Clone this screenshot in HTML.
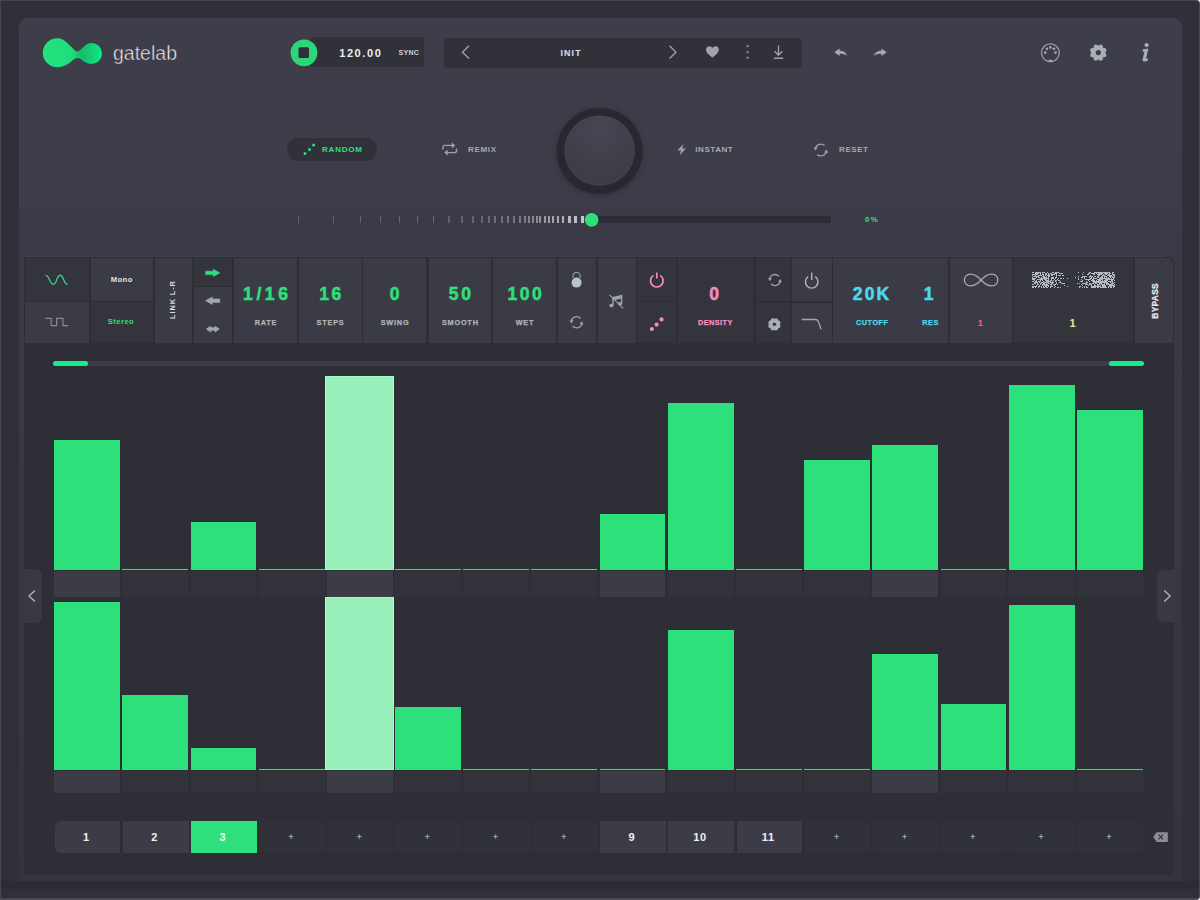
<!DOCTYPE html>
<html><head><meta charset="utf-8"><style>
html,body{margin:0;padding:0;}
body{width:1200px;height:900px;overflow:hidden;position:relative;background:#30303a;font-family:"Liberation Sans", sans-serif;}
.t{position:absolute;width:300px;height:100px;line-height:100px;text-align:center;white-space:nowrap;}
svg{overflow:visible;}
</style></head><body>
<div style="position:absolute;left:0px;top:0px;width:1200px;height:1px;background:#45454f;"></div>
<div style="position:absolute;left:0px;top:0px;width:1px;height:900px;background:#464651;"></div>
<div style="position:absolute;left:1199px;top:0px;width:1px;height:900px;background:#464651;"></div>
<div style="position:absolute;left:0px;top:898px;width:1200px;height:2px;background:#4a4a55;"></div>
<div style="position:absolute;left:1px;top:881px;width:1198px;height:8px;background:#2b2b33;"></div>
<div style="position:absolute;left:19px;top:18px;width:1163px;height:863px;background:linear-gradient(#3e3d4a 0px, #3d3c49 192px, #3b3a47 192px, #3a3a46 238px, #393943 430px, #34343e 863px);border-radius:9px 9px 3px 3px;"></div>
<svg style="position:absolute;left:1196px;top:0px" width="4" height="4"><path d="M0,0 H4 V4 A4,4 0 0 0 0,0 Z" fill="#ffffff"/></svg>
<svg style="position:absolute;left:1196px;top:896px" width="4" height="4"><path d="M4,0 V4 H0 A4,4 0 0 0 4,0 Z" fill="#ffffff"/></svg>
<svg style="position:absolute;left:30px;top:30px;" width="80" height="45" viewBox="30 30 80 45"><defs><linearGradient id="lg" gradientUnits="userSpaceOnUse" x1="42" y1="0" x2="102" y2="0"><stop offset="0" stop-color="#22e47f"/><stop offset="0.5" stop-color="#1edc7a"/><stop offset="0.66" stop-color="#13bd6a"/><stop offset="0.8" stop-color="#15cc72"/><stop offset="1" stop-color="#08ef88"/></linearGradient></defs><path d="M57.3,38.25 C61,38.25 63.5,39.5 66.5,42.3 L75,50.4 C76.5,51.8 78,51.8 79.5,50.6 C83,47.6 86.5,43 91.5,43 A10.5,10.5 0 0 1 91.5,64 C87,64 83.5,61 80.5,59 C78.5,57.8 76.5,57.8 74.5,59 C71,61.5 66,67.25 57.3,67.25 A14.5,14.5 0 0 1 57.3,38.25 Z" fill="url(#lg)"/></svg>
<div class="t" style="left:-5px;top:3.200000000000003px;font-size:19.5px;color:#f0f0f4;font-weight:400;letter-spacing:0px;text-indent:0px;-webkit-text-stroke:0.5px #3c3c47;">gatelab</div>
<div style="position:absolute;left:310px;top:37px;width:114px;height:30px;background:#31313a;border-radius:3px;"></div>
<svg style="position:absolute;left:285px;top:35px;" width="40" height="36" viewBox="285 35 40 36"><circle cx="304" cy="52.8" r="13.4" fill="#2cd679"/><rect x="298.5" y="47.3" width="10.5" height="10.7" rx="1.6" fill="#2f2f38"/></svg>
<div class="t" style="left:210px;top:2.700000000000003px;font-size:11px;color:#ececf0;font-weight:700;letter-spacing:1.6px;text-indent:1.6px;">120.00</div>
<div class="t" style="left:258.7px;top:2.700000000000003px;font-size:7px;color:#d0d0d6;font-weight:700;letter-spacing:0.3px;text-indent:0.3px;">SYNC</div>
<div style="position:absolute;left:444px;top:37.5px;width:358px;height:30px;background:#31313a;border-radius:4px;"></div>
<svg style="position:absolute;left:455px;top:40px;" width="340" height="25" viewBox="455 40 340 25"><path d="M469,45.8 L462.5,52.2 L469,58.6" fill="none" stroke="#a0a0a9" stroke-width="1.4"/><path d="M669.5,45.8 L676,52.2 L669.5,58.6" fill="none" stroke="#a0a0a9" stroke-width="1.4"/><path d="M712.4,57.8 C708.5,54.6 706,52.6 706,49.6 C706,47.4 707.6,46.2 709.3,46.2 C710.7,46.2 711.8,47 712.4,48 C713,47 714.1,46.2 715.5,46.2 C717.2,46.2 718.8,47.4 718.8,49.6 C718.8,52.6 716.3,54.6 712.4,57.8 Z" fill="#a3a3ad"/><circle cx="747.7" cy="46.2" r="1.1" fill="#9a9aa4"/><circle cx="747.7" cy="52.2" r="1.1" fill="#9a9aa4"/><circle cx="747.7" cy="57.8" r="1.1" fill="#9a9aa4"/><path d="M778.5,45.6 V55 M774.6,51.2 L778.5,55.2 L782.4,51.2 M773.8,58.2 H783.2" fill="none" stroke="#a0a0a9" stroke-width="1.4"/></svg>
<div class="t" style="left:420.5px;top:2.700000000000003px;font-size:8.8px;color:#e0e0e6;font-weight:700;letter-spacing:1.2px;text-indent:1.2px;">INIT</div>
<svg style="position:absolute;left:830px;top:44px;" width="60" height="16" viewBox="830 44 60 16"><path d="M834.3,52.3 L839.6,48.5 L839.6,50.7 C843.6,50.7 846.3,52.6 847.2,56 C845.4,54.2 843,53.8 839.6,53.8 L839.6,56.1 Z" fill="#a7a7b0"/><path d="M886.7,52.3 L881.4,48.5 L881.4,50.7 C877.4,50.7 874.7,52.6 873.8,56 C875.6,54.2 878,53.8 881.4,53.8 L881.4,56.1 Z" fill="#a7a7b0"/></svg>
<svg style="position:absolute;left:1036px;top:38px;" width="130" height="30" viewBox="1036 38 130 30"><circle cx="1050.4" cy="52.8" r="8.9" fill="none" stroke="#9e9ea8" stroke-width="1.3"/><circle cx="1045.3" cy="52.6" r="1.3" fill="#a8a8b2"/><circle cx="1046.9" cy="48.8" r="1.3" fill="#a8a8b2"/><circle cx="1050.4" cy="47.4" r="1.3" fill="#a8a8b2"/><circle cx="1053.9" cy="48.8" r="1.3" fill="#a8a8b2"/><circle cx="1055.5" cy="52.6" r="1.3" fill="#a8a8b2"/><rect x="1048.8" y="59.8" width="3.2" height="1.6" fill="#a8a8b2"/><g fill="#a9aeb4"><circle cx="1104.21" cy="55.05" r="2.2"/><circle cx="1100.75" cy="58.51" r="2.2"/><circle cx="1095.85" cy="58.51" r="2.2"/><circle cx="1092.39" cy="55.05" r="2.2"/><circle cx="1092.39" cy="50.15" r="2.2"/><circle cx="1095.85" cy="46.69" r="2.2"/><circle cx="1100.75" cy="46.69" r="2.2"/><circle cx="1104.21" cy="50.15" r="2.2"/><circle cx="1098.3" cy="52.6" r="7.0"/></g><circle cx="1098.3" cy="52.6" r="2.6" fill="#3c3c47"/><circle cx="1146.6" cy="45.0" r="2.1" fill="#a9aeb4"/><path d="M1142.8,49.2 L1148.4,48.6 L1146.2,58 C1146.0,59 1146.8,59.2 1148.2,58.2 L1147.9,60.6 C1145.6,62 1141.9,62.2 1142.6,59.2 L1144.4,51.8 L1142.6,51.8 Z" fill="#a9aeb4"/></svg>
<div style="position:absolute;left:287px;top:138px;width:90px;height:23px;background:#31313a;border-radius:12px;"></div>
<svg style="position:absolute;left:300px;top:140px;" width="20" height="18" viewBox="300 140 20 18"><circle cx="305" cy="153.6" r="1.5" fill="#2de07b"/><circle cx="309.5" cy="149.4" r="1.5" fill="#2de07b"/><circle cx="313.6" cy="145.1" r="1.5" fill="#2de07b"/></svg>
<div class="t" style="left:192px;top:99.5px;font-size:8px;color:#2de07b;font-weight:700;letter-spacing:0.8px;text-indent:0.8px;">RANDOM</div>
<svg style="position:absolute;left:438px;top:140px;" width="24" height="18" viewBox="438 140 24 18"><path d="M443,149.6 V147.2 C443,146.2 443.8,145.4 444.8,145.4 H454 M451.8,143.4 L454.2,145.4 L451.8,147.4 M456.5,148.4 V150.8 C456.5,151.8 455.7,152.6 454.7,152.6 H445.5 M447.7,150.6 L445.3,152.6 L447.7,154.6" fill="none" stroke="#a0a0a9" stroke-width="1.4"/></svg>
<div class="t" style="left:332px;top:99.5px;font-size:8px;color:#a8a8b1;font-weight:700;letter-spacing:0.7px;text-indent:0.7px;">REMIX</div>
<svg style="position:absolute;left:545px;top:97px;" width="110" height="110" viewBox="545 97 110 110"><defs><radialGradient id="kg" cx="0.5" cy="0.2" r="0.9"><stop offset="0" stop-color="#464652"/><stop offset="1" stop-color="#3b3b46"/></radialGradient><filter id="ks" x="-30%" y="-30%" width="160%" height="160%"><feGaussianBlur stdDeviation="2"/></filter></defs><circle cx="599.6" cy="152" r="44" fill="#26262e" opacity="0.5" filter="url(#ks)"/><circle cx="599.6" cy="151" r="43" fill="#28282f"/><circle cx="599.6" cy="150.6" r="35.2" fill="url(#kg)"/><circle cx="599.6" cy="150.6" r="34.8" fill="none" stroke="#4a4a55" stroke-width="0.8" opacity="0.6"/></svg>
<svg style="position:absolute;left:672px;top:140px;" width="20" height="18" viewBox="672 140 20 18"><path d="M683.4,144 L677.4,150.6 L681,150.6 L679.6,155.4 L685.8,148.6 L682.2,148.6 Z" fill="#a0a0a9"/></svg>
<div class="t" style="left:564px;top:99.5px;font-size:8px;color:#a8a8b1;font-weight:700;letter-spacing:0.55px;text-indent:0.55px;">INSTANT</div>
<svg style="position:absolute;left:810px;top:140px;" width="22" height="20" viewBox="810 140 22 20"><path d="M815.4,148.4 A5.6,5.6 0 0 1 824.6,145.6 M826.4,151.6 A5.6,5.6 0 0 1 817.2,154.4" fill="none" stroke="#a0a0a9" stroke-width="1.4"/><path d="M813.6,147.2 L815.4,150.4 L817.8,147.6 Z M828.2,152.8 L826.4,149.6 L824,152.4 Z" fill="#a0a0a9"/></svg>
<div class="t" style="left:703.5px;top:99.5px;font-size:8px;color:#a8a8b1;font-weight:700;letter-spacing:0.55px;text-indent:0.55px;">RESET</div>
<div style="position:absolute;left:298px;top:216px;width:1px;height:7px;background:rgb(100,100,108);"></div>
<div style="position:absolute;left:333px;top:216px;width:1px;height:7px;background:rgb(100,100,108);"></div>
<div style="position:absolute;left:360px;top:216px;width:1px;height:7px;background:rgb(100,100,108);"></div>
<div style="position:absolute;left:380px;top:216px;width:1px;height:7px;background:rgb(101,101,109);"></div>
<div style="position:absolute;left:399px;top:216px;width:1px;height:7px;background:rgb(103,103,111);"></div>
<div style="position:absolute;left:417px;top:216px;width:1px;height:7px;background:rgb(104,104,112);"></div>
<div style="position:absolute;left:433px;top:216px;width:1px;height:7px;background:rgb(105,105,113);"></div>
<div style="position:absolute;left:448px;top:216px;width:2px;height:7px;background:rgb(96,96,104);"></div>
<div style="position:absolute;left:461px;top:216px;width:2px;height:7px;background:rgb(98,98,106);"></div>
<div style="position:absolute;left:472px;top:216px;width:2px;height:7px;background:rgb(100,100,108);"></div>
<div style="position:absolute;left:481px;top:216px;width:2px;height:7px;background:rgb(102,102,110);"></div>
<div style="position:absolute;left:488px;top:216px;width:2px;height:7px;background:rgb(105,105,113);"></div>
<div style="position:absolute;left:494px;top:216px;width:2px;height:7px;background:rgb(108,108,116);"></div>
<div style="position:absolute;left:501px;top:216px;width:2px;height:7px;background:rgb(111,111,119);"></div>
<div style="position:absolute;left:507px;top:216px;width:2px;height:7px;background:rgb(115,115,123);"></div>
<div style="position:absolute;left:513px;top:216px;width:2px;height:7px;background:rgb(118,118,126);"></div>
<div style="position:absolute;left:519px;top:216px;width:2px;height:7px;background:rgb(122,122,130);"></div>
<div style="position:absolute;left:524px;top:216px;width:2px;height:7px;background:rgb(127,127,135);"></div>
<div style="position:absolute;left:528px;top:216px;width:2px;height:7px;background:rgb(131,131,139);"></div>
<div style="position:absolute;left:532px;top:216px;width:2px;height:7px;background:rgb(136,136,144);"></div>
<div style="position:absolute;left:536px;top:216px;width:2px;height:7px;background:rgb(141,141,149);"></div>
<div style="position:absolute;left:539px;top:216px;width:2px;height:7px;background:rgb(146,146,154);"></div>
<div style="position:absolute;left:544px;top:216px;width:2px;height:7px;background:rgb(152,152,160);"></div>
<div style="position:absolute;left:548px;top:216px;width:2px;height:7px;background:rgb(157,157,165);"></div>
<div style="position:absolute;left:552px;top:216px;width:2px;height:7px;background:rgb(163,163,171);"></div>
<div style="position:absolute;left:557px;top:216px;width:2px;height:7px;background:rgb(170,170,178);"></div>
<div style="position:absolute;left:562px;top:216px;width:2px;height:7px;background:rgb(176,176,184);"></div>
<div style="position:absolute;left:568px;top:216px;width:3px;height:7px;background:rgb(183,183,191);"></div>
<div style="position:absolute;left:574px;top:216px;width:3px;height:7px;background:rgb(190,190,198);"></div>
<div style="position:absolute;left:581px;top:216px;width:3px;height:7px;background:rgb(198,198,206);"></div>
<div style="position:absolute;left:598px;top:216.3px;width:233px;height:7px;background:#2c2c35;"></div>
<svg style="position:absolute;left:580px;top:208px;" width="24" height="24" viewBox="580 208 24 24"><circle cx="591.6" cy="219.8" r="6.9" fill="#2de07b"/></svg>
<div class="t" style="left:721.5px;top:169.8px;font-size:8px;color:#2de07b;font-weight:700;letter-spacing:1.2px;text-indent:1.2px;">0%</div>
<div style="position:absolute;left:24px;top:256px;width:1150px;height:619px;background:#2e2e37;border-radius:0 8px 2px 2px;"></div>
<div style="position:absolute;left:24px;top:256px;width:1142px;height:1px;background:#40404b;"></div>
<div style="position:absolute;left:25px;top:258px;width:64px;height:42.5px;background:#34343d;"></div>
<div style="position:absolute;left:25px;top:302px;width:64px;height:41px;background:#3b3b45;"></div>
<div style="position:absolute;left:90.5px;top:258px;width:62.2px;height:42.5px;background:#3b3b45;"></div>
<div style="position:absolute;left:90.5px;top:302px;width:62.2px;height:41px;background:#34343d;"></div>
<div style="position:absolute;left:154.5px;top:258px;width:37.7px;height:85px;background:#3b3b45;"></div>
<div style="position:absolute;left:194px;top:258px;width:37.5px;height:27.5px;background:#34343d;"></div>
<div style="position:absolute;left:194px;top:287px;width:37.5px;height:56px;background:#3b3b45;"></div>
<div style="position:absolute;left:234px;top:258px;width:63px;height:85px;background:#3b3b45;"></div>
<div style="position:absolute;left:299px;top:258px;width:62.5px;height:85px;background:#3b3b45;"></div>
<div style="position:absolute;left:363.3px;top:258px;width:62.7px;height:85px;background:#3b3b45;"></div>
<div style="position:absolute;left:428.5px;top:258px;width:62.8px;height:85px;background:#3b3b45;"></div>
<div style="position:absolute;left:493px;top:258px;width:63.3px;height:85px;background:#3b3b45;"></div>
<div style="position:absolute;left:557.5px;top:258px;width:38.1px;height:85px;background:#3b3b45;"></div>
<div style="position:absolute;left:597.5px;top:258px;width:38.1px;height:85px;background:#3b3b45;"></div>
<div style="position:absolute;left:637.3px;top:258px;width:38.3px;height:42.5px;background:#34343d;"></div>
<div style="position:absolute;left:637.3px;top:302px;width:38.3px;height:41px;background:#34343d;"></div>
<div style="position:absolute;left:677.8px;top:258px;width:75.7px;height:85px;background:#34343d;"></div>
<div style="position:absolute;left:755.5px;top:258px;width:35.5px;height:42.5px;background:#34343d;"></div>
<div style="position:absolute;left:755.5px;top:302.5px;width:35.5px;height:40.5px;background:#34343d;"></div>
<div style="position:absolute;left:792.3px;top:258px;width:39.3px;height:42.5px;background:#3b3b45;"></div>
<div style="position:absolute;left:792.3px;top:302.5px;width:39.3px;height:40.5px;background:#3b3b45;"></div>
<div style="position:absolute;left:833.3px;top:258px;width:114.5px;height:85px;background:#3b3b45;"></div>
<div style="position:absolute;left:950px;top:258px;width:62px;height:85px;background:#3b3b45;"></div>
<div style="position:absolute;left:1013.7px;top:258px;width:119.5px;height:85px;background:#34343d;"></div>
<div style="position:absolute;left:1134.7px;top:258px;width:38.0px;height:85px;background:#3b3b45;border-radius:0 6px 0 0;"></div>
<svg style="position:absolute;left:40px;top:268px;" width="34" height="66" viewBox="40 268 34 66"><path d="M45.6,275.4 C49.6,275.4 49.4,284.2 53.3,284.2 C57.2,284.2 56.4,275.2 60.1,275.2 C63.8,275.2 63.6,284.2 67.4,284.2" fill="none" stroke="#34cf84" stroke-width="1.4"/><path d="M45.5,318.3 H51.2 V325.7 H56.6 V318.3 H62.9 V325.7 H68.3" fill="none" stroke="#8a8a95" stroke-width="1.2"/></svg>
<div class="t" style="left:-28.5px;top:230px;font-size:7.6px;color:#e2e2e8;font-weight:700;letter-spacing:0.5px;text-indent:0.5px;">Mono</div>
<div class="t" style="left:-29.299999999999997px;top:272px;font-size:7.6px;color:#2de07b;font-weight:700;letter-spacing:0.5px;text-indent:0.5px;">Stereo</div>
<div class="t" style="left:23px;top:250px;font-size:7.4px;color:#dcdce2;font-weight:700;letter-spacing:0.9px;text-indent:0.9px;transform:rotate(-90deg);">LINK L-R</div>
<svg style="position:absolute;left:200px;top:262px;" width="28" height="76" viewBox="200 262 28 76"><path d="M205.6,271.2 H213.2 V269.2 L219.8,272.9 L213.2,276.6 V274.6 H205.6 Z" fill="#2de07b" stroke="#2de07b" stroke-width="0.6" stroke-linejoin="round"/><path d="M219.8,299 H212.2 V297 L205.6,300.7 L212.2,304.4 V302.4 H219.8 Z" fill="#a2a8ae" stroke="#a2a8ae" stroke-width="0.6" stroke-linejoin="round"/><path d="M206.2,329.1 L210.6,326 V327.6 H215 V326 L219.4,329.1 L215,332.2 V330.6 H210.6 V332.2 Z" fill="#a2a8ae" stroke="#a2a8ae" stroke-width="0.5" stroke-linejoin="round"/></svg>
<div class="t" style="left:115.5px;top:244px;font-size:17.5px;color:#2de07b;font-weight:700;letter-spacing:3.6px;text-indent:3.6px;-webkit-text-stroke:0.5px #2de07b;">1/16</div>
<div class="t" style="left:115.5px;top:273.2px;font-size:7.3px;color:#b2b2ba;font-weight:700;letter-spacing:0.8px;text-indent:0.8px;-webkit-text-stroke:0.25px #b2b2ba;">RATE</div>
<div class="t" style="left:180.2px;top:244px;font-size:17.5px;color:#2de07b;font-weight:700;letter-spacing:2.6px;text-indent:2.6px;-webkit-text-stroke:0.5px #2de07b;">16</div>
<div class="t" style="left:180.2px;top:273.2px;font-size:7.3px;color:#b2b2ba;font-weight:700;letter-spacing:0.8px;text-indent:0.8px;-webkit-text-stroke:0.25px #b2b2ba;">STEPS</div>
<div class="t" style="left:244.60000000000002px;top:244px;font-size:17.5px;color:#2de07b;font-weight:700;letter-spacing:2.6px;text-indent:2.6px;-webkit-text-stroke:0.5px #2de07b;">0</div>
<div class="t" style="left:244.60000000000002px;top:273.2px;font-size:7.3px;color:#b2b2ba;font-weight:700;letter-spacing:0.8px;text-indent:0.8px;-webkit-text-stroke:0.25px #b2b2ba;">SWING</div>
<div class="t" style="left:309.9px;top:244px;font-size:17.5px;color:#2de07b;font-weight:700;letter-spacing:2.6px;text-indent:2.6px;-webkit-text-stroke:0.5px #2de07b;">50</div>
<div class="t" style="left:309.9px;top:273.2px;font-size:7.3px;color:#b2b2ba;font-weight:700;letter-spacing:0.8px;text-indent:0.8px;-webkit-text-stroke:0.25px #b2b2ba;">SMOOTH</div>
<div class="t" style="left:374.6px;top:244px;font-size:17.5px;color:#2de07b;font-weight:700;letter-spacing:2.6px;text-indent:2.6px;-webkit-text-stroke:0.5px #2de07b;">100</div>
<div class="t" style="left:374.6px;top:273.2px;font-size:7.3px;color:#b2b2ba;font-weight:700;letter-spacing:0.8px;text-indent:0.8px;-webkit-text-stroke:0.25px #b2b2ba;">WET</div>
<svg style="position:absolute;left:565px;top:268px;" width="24" height="64" viewBox="565 268 24 64"><path d="M573,278 V276 A3.6,3.6 0 0 1 580.2,276 V278" fill="none" stroke="#8a9298" stroke-width="1.3"/><circle cx="576.6" cy="282.6" r="5" fill="#b8c3c5"/><path d="M571.2,321.2 A5.4,5.4 0 0 1 580.6,318.6 M582,323.4 A5.4,5.4 0 0 1 572.6,326.0" fill="none" stroke="#a0a0a9" stroke-width="1.3"/><path d="M569.6,320.2 L571.4,323.4 L573.6,320.6 Z M583.6,324.4 L581.8,321.2 L579.6,324 Z" fill="#a0a0a9"/></svg>
<svg style="position:absolute;left:604px;top:290px;" width="24" height="22" viewBox="604 290 24 22"><path d="M613,305.2 V297.6 L621.6,295.6 V303.4" fill="none" stroke="#9fa2aa" stroke-width="1.4"/><path d="M613,297.6 L621.6,295.6 V298.4 L613,300.4 Z" fill="#9fa2aa"/><ellipse cx="611.4" cy="305.6" rx="2.2" ry="1.8" fill="#9fa2aa"/><ellipse cx="620" cy="303.8" rx="2.2" ry="1.8" fill="#9fa2aa"/><path d="M609.6,294.8 L623.2,308.4" stroke="#9fa2aa" stroke-width="1.1"/></svg>
<svg style="position:absolute;left:645px;top:270px;" width="26" height="66" viewBox="645 270 26 66"><path d="M653.4,275.4 A6.3,6.3 0 1 0 660.2,275.4" fill="none" stroke="#f58cc0" stroke-width="1.7"/><path d="M656.8,272.6 V278.4" stroke="#f58cc0" stroke-width="1.6"/><circle cx="651.9" cy="329" r="2.1" fill="#f58cc0"/><circle cx="656.6" cy="324.6" r="2.1" fill="#f58cc0"/><circle cx="661.5" cy="319.4" r="2.1" fill="#f58cc0"/></svg>
<div class="t" style="left:564px;top:244px;font-size:17.5px;color:#f58cc0;font-weight:700;letter-spacing:0px;text-indent:0px;-webkit-text-stroke:0.5px #f58cc0;">0</div>
<div class="t" style="left:565.2px;top:273.2px;font-size:7.3px;color:#f58cc0;font-weight:700;letter-spacing:0.45px;text-indent:0.45px;-webkit-text-stroke:0.25px #f58cc0;">DENSITY</div>
<svg style="position:absolute;left:765px;top:270px;" width="62" height="64" viewBox="765 270 62 64"><path d="M769.6,279 A5.4,5.4 0 0 1 779,276.4 M780.4,281.2 A5.4,5.4 0 0 1 771,283.8" fill="none" stroke="#a0a0a9" stroke-width="1.3"/><path d="M768,278 L769.8,281.2 L772,278.4 Z M782,282.2 L780.2,279 L778,281.8 Z" fill="#a0a0a9"/><g fill="#a9aeb4"><circle cx="778.28" cy="325.91" r="2.2"/><circle cx="776.01" cy="328.18" r="2.2"/><circle cx="772.79" cy="328.18" r="2.2"/><circle cx="770.52" cy="325.91" r="2.2"/><circle cx="770.52" cy="322.69" r="2.2"/><circle cx="772.79" cy="320.42" r="2.2"/><circle cx="776.01" cy="320.42" r="2.2"/><circle cx="778.28" cy="322.69" r="2.2"/><circle cx="774.4" cy="324.3" r="5.1"/></g><circle cx="774.4" cy="324.3" r="1.7" fill="#34343d"/><path d="M808.2,276.6 A6.3,6.3 0 1 0 815.2,276.6" fill="none" stroke="#b2b2ba" stroke-width="1.4"/><path d="M811.7,272.6 V280" stroke="#b2b2ba" stroke-width="1.4"/><path d="M801.6,319.5 H815.6 C817.4,319.5 818,320.4 818.6,322 L821,329.4" fill="none" stroke="#a7a7b0" stroke-width="1.3"/></svg>
<div class="t" style="left:721px;top:244px;font-size:17.5px;color:#4dd8f0;font-weight:700;letter-spacing:2.2px;text-indent:2.2px;-webkit-text-stroke:0.5px #4dd8f0;">20K</div>
<div class="t" style="left:778.6px;top:244px;font-size:17.5px;color:#4dd8f0;font-weight:700;letter-spacing:0px;text-indent:0px;-webkit-text-stroke:0.5px #4dd8f0;">1</div>
<div class="t" style="left:722px;top:273.2px;font-size:7.3px;color:#4dd8f0;font-weight:700;letter-spacing:0.5px;text-indent:0.5px;-webkit-text-stroke:0.25px #4dd8f0;">CUTOFF</div>
<div class="t" style="left:780.3px;top:273.2px;font-size:7.3px;color:#4dd8f0;font-weight:700;letter-spacing:0.5px;text-indent:0.5px;-webkit-text-stroke:0.25px #4dd8f0;">RES</div>
<svg style="position:absolute;left:960px;top:270px;" width="42" height="20" viewBox="960 270 42 20"><path d="M981.1,280 C977,275.2 974.5,274.2 970.2,274.2 C966.8,274.2 964.4,276.8 964.4,280 C964.4,283.2 966.8,285.8 970.2,285.8 C974.5,285.8 977,284.8 981.1,280 C985.2,275.2 987.7,274.2 992,274.2 C995.4,274.2 997.8,276.8 997.8,280 C997.8,283.2 995.4,285.8 992,285.8 C987.7,285.8 985.2,284.8 981.1,280 Z" fill="none" stroke="#a9a9b2" stroke-width="1.3"/></svg>
<div class="t" style="left:830.3px;top:273px;font-size:9px;color:#f2647c;font-weight:700;letter-spacing:0px;text-indent:0px;">1</div>
<svg style="position:absolute;left:1028px;top:268px;" width="92" height="24" viewBox="1028 268 92 24"><g fill="#b6b9c0"><rect x="1032" y="272" width="2" height="1"/><rect x="1035" y="272" width="6" height="1"/><rect x="1042" y="272" width="3" height="1"/><rect x="1047" y="272" width="1" height="1"/><rect x="1052" y="272" width="2" height="1"/><rect x="1055" y="272" width="4" height="1"/><rect x="1035" y="273" width="4" height="1"/><rect x="1040" y="273" width="1" height="1"/><rect x="1042" y="273" width="1" height="1"/><rect x="1045" y="273" width="2" height="1"/><rect x="1048" y="273" width="1" height="1"/><rect x="1050" y="273" width="2" height="1"/><rect x="1054" y="273" width="3" height="1"/><rect x="1059" y="273" width="4" height="1"/><rect x="1032" y="274" width="6" height="1"/><rect x="1040" y="274" width="1" height="1"/><rect x="1042" y="274" width="2" height="1"/><rect x="1045" y="274" width="2" height="1"/><rect x="1048" y="274" width="2" height="1"/><rect x="1051" y="274" width="4" height="1"/><rect x="1056" y="274" width="1" height="1"/><rect x="1032" y="275" width="1" height="1"/><rect x="1035" y="275" width="1" height="1"/><rect x="1038" y="275" width="4" height="1"/><rect x="1043" y="275" width="1" height="1"/><rect x="1045" y="275" width="1" height="1"/><rect x="1047" y="275" width="3" height="1"/><rect x="1051" y="275" width="2" height="1"/><rect x="1056" y="275" width="1" height="1"/><rect x="1058" y="275" width="3" height="1"/><rect x="1062" y="275" width="2" height="1"/><rect x="1033" y="276" width="6" height="1"/><rect x="1042" y="276" width="3" height="1"/><rect x="1046" y="276" width="1" height="1"/><rect x="1048" y="276" width="2" height="1"/><rect x="1056" y="276" width="1" height="1"/><rect x="1032" y="277" width="1" height="1"/><rect x="1036" y="277" width="1" height="1"/><rect x="1038" y="277" width="2" height="1"/><rect x="1041" y="277" width="1" height="1"/><rect x="1043" y="277" width="4" height="1"/><rect x="1048" y="277" width="1" height="1"/><rect x="1051" y="277" width="3" height="1"/><rect x="1055" y="277" width="2" height="1"/><rect x="1032" y="278" width="4" height="1"/><rect x="1040" y="278" width="9" height="1"/><rect x="1051" y="278" width="3" height="1"/><rect x="1055" y="278" width="1" height="1"/><rect x="1058" y="278" width="1" height="1"/><rect x="1060" y="278" width="2" height="1"/><rect x="1063" y="278" width="1" height="1"/><rect x="1067" y="278" width="1" height="1"/><rect x="1032" y="279" width="3" height="1"/><rect x="1037" y="279" width="6" height="1"/><rect x="1044" y="279" width="3" height="1"/><rect x="1048" y="279" width="1" height="1"/><rect x="1051" y="279" width="1" height="1"/><rect x="1054" y="279" width="1" height="1"/><rect x="1057" y="279" width="1" height="1"/><rect x="1034" y="280" width="1" height="1"/><rect x="1036" y="280" width="1" height="1"/><rect x="1040" y="280" width="1" height="1"/><rect x="1042" y="280" width="1" height="1"/><rect x="1045" y="280" width="4" height="1"/><rect x="1050" y="280" width="2" height="1"/><rect x="1053" y="280" width="1" height="1"/><rect x="1055" y="280" width="2" height="1"/><rect x="1058" y="280" width="2" height="1"/><rect x="1032" y="281" width="2" height="1"/><rect x="1035" y="281" width="2" height="1"/><rect x="1038" y="281" width="3" height="1"/><rect x="1043" y="281" width="1" height="1"/><rect x="1046" y="281" width="5" height="1"/><rect x="1052" y="281" width="1" height="1"/><rect x="1055" y="281" width="1" height="1"/><rect x="1060" y="281" width="1" height="1"/><rect x="1034" y="282" width="4" height="1"/><rect x="1039" y="282" width="1" height="1"/><rect x="1041" y="282" width="8" height="1"/><rect x="1050" y="282" width="4" height="1"/><rect x="1056" y="282" width="1" height="1"/><rect x="1059" y="282" width="2" height="1"/><rect x="1034" y="283" width="2" height="1"/><rect x="1037" y="283" width="1" height="1"/><rect x="1040" y="283" width="2" height="1"/><rect x="1043" y="283" width="2" height="1"/><rect x="1046" y="283" width="1" height="1"/><rect x="1048" y="283" width="2" height="1"/><rect x="1051" y="283" width="2" height="1"/><rect x="1056" y="283" width="1" height="1"/><rect x="1061" y="283" width="4" height="1"/><rect x="1032" y="284" width="2" height="1"/><rect x="1037" y="284" width="2" height="1"/><rect x="1040" y="284" width="1" height="1"/><rect x="1042" y="284" width="6" height="1"/><rect x="1050" y="284" width="2" height="1"/><rect x="1053" y="284" width="3" height="1"/><rect x="1057" y="284" width="1" height="1"/><rect x="1036" y="285" width="1" height="1"/><rect x="1039" y="285" width="1" height="1"/><rect x="1042" y="285" width="1" height="1"/><rect x="1044" y="285" width="5" height="1"/><rect x="1051" y="285" width="1" height="1"/><rect x="1054" y="285" width="1" height="1"/><rect x="1064" y="285" width="1" height="1"/><rect x="1032" y="286" width="5" height="1"/><rect x="1038" y="286" width="2" height="1"/><rect x="1041" y="286" width="1" height="1"/><rect x="1043" y="286" width="1" height="1"/><rect x="1045" y="286" width="2" height="1"/><rect x="1048" y="286" width="1" height="1"/><rect x="1050" y="286" width="3" height="1"/><rect x="1055" y="286" width="1" height="1"/><rect x="1067" y="286" width="1" height="1"/><rect x="1032" y="287" width="2" height="1"/><rect x="1035" y="287" width="1" height="1"/><rect x="1038" y="287" width="1" height="1"/><rect x="1041" y="287" width="1" height="1"/><rect x="1043" y="287" width="2" height="1"/><rect x="1046" y="287" width="2" height="1"/><rect x="1050" y="287" width="1" height="1"/><rect x="1054" y="287" width="1" height="1"/><rect x="1057" y="287" width="2" height="1"/><rect x="1060" y="287" width="1" height="1"/><rect x="1078" y="272" width="1" height="1"/><rect x="1083" y="272" width="1" height="1"/><rect x="1089" y="272" width="2" height="1"/><rect x="1094" y="272" width="16" height="1"/><rect x="1112" y="272" width="2" height="1"/><rect x="1088" y="273" width="2" height="1"/><rect x="1091" y="273" width="4" height="1"/><rect x="1096" y="273" width="1" height="1"/><rect x="1098" y="273" width="5" height="1"/><rect x="1104" y="273" width="4" height="1"/><rect x="1109" y="273" width="2" height="1"/><rect x="1112" y="273" width="1" height="1"/><rect x="1082" y="274" width="1" height="1"/><rect x="1087" y="274" width="2" height="1"/><rect x="1093" y="274" width="2" height="1"/><rect x="1097" y="274" width="5" height="1"/><rect x="1103" y="274" width="1" height="1"/><rect x="1105" y="274" width="2" height="1"/><rect x="1108" y="274" width="2" height="1"/><rect x="1112" y="274" width="3" height="1"/><rect x="1090" y="275" width="1" height="1"/><rect x="1098" y="275" width="2" height="1"/><rect x="1102" y="275" width="3" height="1"/><rect x="1107" y="275" width="5" height="1"/><rect x="1113" y="275" width="2" height="1"/><rect x="1078" y="276" width="1" height="1"/><rect x="1082" y="276" width="5" height="1"/><rect x="1089" y="276" width="4" height="1"/><rect x="1094" y="276" width="2" height="1"/><rect x="1097" y="276" width="2" height="1"/><rect x="1101" y="276" width="2" height="1"/><rect x="1104" y="276" width="3" height="1"/><rect x="1109" y="276" width="4" height="1"/><rect x="1114" y="276" width="1" height="1"/><rect x="1075" y="277" width="1" height="1"/><rect x="1081" y="277" width="2" height="1"/><rect x="1084" y="277" width="1" height="1"/><rect x="1089" y="277" width="1" height="1"/><rect x="1091" y="277" width="1" height="1"/><rect x="1093" y="277" width="1" height="1"/><rect x="1097" y="277" width="2" height="1"/><rect x="1100" y="277" width="3" height="1"/><rect x="1104" y="277" width="1" height="1"/><rect x="1106" y="277" width="1" height="1"/><rect x="1108" y="277" width="1" height="1"/><rect x="1110" y="277" width="1" height="1"/><rect x="1112" y="277" width="3" height="1"/><rect x="1078" y="278" width="1" height="1"/><rect x="1084" y="278" width="1" height="1"/><rect x="1090" y="278" width="2" height="1"/><rect x="1093" y="278" width="4" height="1"/><rect x="1099" y="278" width="11" height="1"/><rect x="1111" y="278" width="1" height="1"/><rect x="1113" y="278" width="1" height="1"/><rect x="1078" y="279" width="1" height="1"/><rect x="1081" y="279" width="1" height="1"/><rect x="1085" y="279" width="6" height="1"/><rect x="1092" y="279" width="2" height="1"/><rect x="1097" y="279" width="6" height="1"/><rect x="1105" y="279" width="9" height="1"/><rect x="1082" y="280" width="1" height="1"/><rect x="1088" y="280" width="1" height="1"/><rect x="1091" y="280" width="4" height="1"/><rect x="1096" y="280" width="1" height="1"/><rect x="1098" y="280" width="3" height="1"/><rect x="1102" y="280" width="1" height="1"/><rect x="1104" y="280" width="4" height="1"/><rect x="1111" y="280" width="2" height="1"/><rect x="1114" y="280" width="1" height="1"/><rect x="1080" y="281" width="3" height="1"/><rect x="1086" y="281" width="1" height="1"/><rect x="1089" y="281" width="1" height="1"/><rect x="1092" y="281" width="15" height="1"/><rect x="1108" y="281" width="5" height="1"/><rect x="1086" y="282" width="2" height="1"/><rect x="1093" y="282" width="15" height="1"/><rect x="1110" y="282" width="1" height="1"/><rect x="1112" y="282" width="1" height="1"/><rect x="1114" y="282" width="1" height="1"/><rect x="1077" y="283" width="1" height="1"/><rect x="1079" y="283" width="1" height="1"/><rect x="1082" y="283" width="5" height="1"/><rect x="1089" y="283" width="2" height="1"/><rect x="1092" y="283" width="2" height="1"/><rect x="1095" y="283" width="2" height="1"/><rect x="1099" y="283" width="3" height="1"/><rect x="1104" y="283" width="1" height="1"/><rect x="1106" y="283" width="3" height="1"/><rect x="1111" y="283" width="3" height="1"/><rect x="1081" y="284" width="1" height="1"/><rect x="1085" y="284" width="3" height="1"/><rect x="1089" y="284" width="3" height="1"/><rect x="1094" y="284" width="1" height="1"/><rect x="1097" y="284" width="3" height="1"/><rect x="1101" y="284" width="4" height="1"/><rect x="1106" y="284" width="7" height="1"/><rect x="1114" y="284" width="1" height="1"/><rect x="1082" y="285" width="1" height="1"/><rect x="1088" y="285" width="1" height="1"/><rect x="1091" y="285" width="1" height="1"/><rect x="1094" y="285" width="2" height="1"/><rect x="1097" y="285" width="2" height="1"/><rect x="1100" y="285" width="1" height="1"/><rect x="1102" y="285" width="4" height="1"/><rect x="1109" y="285" width="6" height="1"/><rect x="1079" y="286" width="2" height="1"/><rect x="1084" y="286" width="1" height="1"/><rect x="1086" y="286" width="1" height="1"/><rect x="1091" y="286" width="10" height="1"/><rect x="1102" y="286" width="4" height="1"/><rect x="1108" y="286" width="4" height="1"/><rect x="1113" y="286" width="2" height="1"/><rect x="1079" y="287" width="1" height="1"/><rect x="1082" y="287" width="1" height="1"/><rect x="1084" y="287" width="1" height="1"/><rect x="1086" y="287" width="2" height="1"/><rect x="1091" y="287" width="5" height="1"/><rect x="1097" y="287" width="2" height="1"/><rect x="1100" y="287" width="7" height="1"/><rect x="1108" y="287" width="1" height="1"/><rect x="1110" y="287" width="2" height="1"/><rect x="1113" y="287" width="1" height="1"/></g></svg>
<div class="t" style="left:922.5px;top:272.8px;font-size:11px;color:#efe887;font-weight:700;letter-spacing:0px;text-indent:0px;">1</div>
<div class="t" style="left:1005px;top:251.39999999999998px;font-size:8.4px;color:#e4e4ea;font-weight:700;letter-spacing:0.3px;text-indent:0.3px;transform:rotate(-90deg);-webkit-text-stroke:0.3px #e4e4ea;">BYPASS</div>
<div style="position:absolute;left:54px;top:361px;width:1089px;height:5px;background:#3c3c46;border-radius:3px;"></div>
<div style="position:absolute;left:52.8px;top:360.7px;width:35.2px;height:5.6px;background:#12ee8e;border-radius:3px;"></div>
<div style="position:absolute;left:1108.6px;top:360.7px;width:35px;height:5.6px;background:#12ee8e;border-radius:3px;"></div>
<div style="position:absolute;left:54.2px;top:570.6px;width:65.8px;height:26.2px;background:#3c3c47;"></div>
<div style="position:absolute;left:54.2px;top:771px;width:65.8px;height:22.4px;background:#3c3c47;"></div>
<div style="position:absolute;left:54.2px;top:440px;width:65.8px;height:130.1px;background:#2de07b;"></div>
<div style="position:absolute;left:54.2px;top:602px;width:65.8px;height:168px;background:#2de07b;"></div>
<div style="position:absolute;left:122.38px;top:570.6px;width:65.8px;height:26.2px;background:#32323b;"></div>
<div style="position:absolute;left:122.38px;top:771px;width:65.8px;height:22.4px;background:#32323b;"></div>
<div style="position:absolute;left:122.38px;top:567.7px;width:65.8px;height:1px;background:#173f2b;"></div>
<div style="position:absolute;left:122.38px;top:568.6px;width:65.8px;height:1.5px;background:#5ec490;"></div>
<div style="position:absolute;left:122.38px;top:694.6px;width:65.8px;height:75.4px;background:#2de07b;"></div>
<div style="position:absolute;left:190.56px;top:570.6px;width:65.8px;height:26.2px;background:#32323b;"></div>
<div style="position:absolute;left:190.56px;top:771px;width:65.8px;height:22.4px;background:#32323b;"></div>
<div style="position:absolute;left:190.56px;top:522px;width:65.8px;height:48.1px;background:#2de07b;"></div>
<div style="position:absolute;left:190.56px;top:748px;width:65.8px;height:22px;background:#2de07b;"></div>
<div style="position:absolute;left:258.74px;top:570.6px;width:65.8px;height:26.2px;background:#32323b;"></div>
<div style="position:absolute;left:258.74px;top:771px;width:65.8px;height:22.4px;background:#32323b;"></div>
<div style="position:absolute;left:258.74px;top:567.7px;width:65.8px;height:1px;background:#173f2b;"></div>
<div style="position:absolute;left:258.74px;top:568.6px;width:65.8px;height:1.5px;background:#5ec490;"></div>
<div style="position:absolute;left:258.74px;top:767.6px;width:65.8px;height:1px;background:#173f2b;"></div>
<div style="position:absolute;left:258.74px;top:768.5px;width:65.8px;height:1.5px;background:#5ec490;"></div>
<div style="position:absolute;left:326.92px;top:570.6px;width:65.8px;height:26.2px;background:#3c3c47;"></div>
<div style="position:absolute;left:326.92px;top:771px;width:65.8px;height:22.4px;background:#3c3c47;"></div>
<div style="position:absolute;left:325.42px;top:375.5px;width:68.8px;height:194.6px;background:#97f0ba;box-shadow:inset 0 0 0 1px #b2f6cf;"></div>
<div style="position:absolute;left:325.42px;top:596.5px;width:68.8px;height:173.5px;background:#97f0ba;box-shadow:inset 0 0 0 1px #b2f6cf;"></div>
<div style="position:absolute;left:395.1px;top:570.6px;width:65.8px;height:26.2px;background:#32323b;"></div>
<div style="position:absolute;left:395.1px;top:771px;width:65.8px;height:22.4px;background:#32323b;"></div>
<div style="position:absolute;left:395.1px;top:567.7px;width:65.8px;height:1px;background:#173f2b;"></div>
<div style="position:absolute;left:395.1px;top:568.6px;width:65.8px;height:1.5px;background:#5ec490;"></div>
<div style="position:absolute;left:395.1px;top:706.5px;width:65.8px;height:63.5px;background:#2de07b;"></div>
<div style="position:absolute;left:463.28px;top:570.6px;width:65.8px;height:26.2px;background:#32323b;"></div>
<div style="position:absolute;left:463.28px;top:771px;width:65.8px;height:22.4px;background:#32323b;"></div>
<div style="position:absolute;left:463.28px;top:567.7px;width:65.8px;height:1px;background:#173f2b;"></div>
<div style="position:absolute;left:463.28px;top:568.6px;width:65.8px;height:1.5px;background:#5ec490;"></div>
<div style="position:absolute;left:463.28px;top:767.6px;width:65.8px;height:1px;background:#173f2b;"></div>
<div style="position:absolute;left:463.28px;top:768.5px;width:65.8px;height:1.5px;background:#5ec490;"></div>
<div style="position:absolute;left:531.46px;top:570.6px;width:65.8px;height:26.2px;background:#32323b;"></div>
<div style="position:absolute;left:531.46px;top:771px;width:65.8px;height:22.4px;background:#32323b;"></div>
<div style="position:absolute;left:531.46px;top:567.7px;width:65.8px;height:1px;background:#173f2b;"></div>
<div style="position:absolute;left:531.46px;top:568.6px;width:65.8px;height:1.5px;background:#5ec490;"></div>
<div style="position:absolute;left:531.46px;top:767.6px;width:65.8px;height:1px;background:#173f2b;"></div>
<div style="position:absolute;left:531.46px;top:768.5px;width:65.8px;height:1.5px;background:#5ec490;"></div>
<div style="position:absolute;left:599.64px;top:570.6px;width:65.8px;height:26.2px;background:#3c3c47;"></div>
<div style="position:absolute;left:599.64px;top:771px;width:65.8px;height:22.4px;background:#3c3c47;"></div>
<div style="position:absolute;left:599.64px;top:513.7px;width:65.8px;height:56.4px;background:#2de07b;"></div>
<div style="position:absolute;left:599.64px;top:767.6px;width:65.8px;height:1px;background:#173f2b;"></div>
<div style="position:absolute;left:599.64px;top:768.5px;width:65.8px;height:1.5px;background:#5ec490;"></div>
<div style="position:absolute;left:667.82px;top:570.6px;width:65.8px;height:26.2px;background:#32323b;"></div>
<div style="position:absolute;left:667.82px;top:771px;width:65.8px;height:22.4px;background:#32323b;"></div>
<div style="position:absolute;left:667.82px;top:402.5px;width:65.8px;height:167.6px;background:#2de07b;"></div>
<div style="position:absolute;left:667.82px;top:630px;width:65.8px;height:140px;background:#2de07b;"></div>
<div style="position:absolute;left:736.0px;top:570.6px;width:65.8px;height:26.2px;background:#32323b;"></div>
<div style="position:absolute;left:736.0px;top:771px;width:65.8px;height:22.4px;background:#32323b;"></div>
<div style="position:absolute;left:736.0px;top:567.7px;width:65.8px;height:1px;background:#173f2b;"></div>
<div style="position:absolute;left:736.0px;top:568.6px;width:65.8px;height:1.5px;background:#5ec490;"></div>
<div style="position:absolute;left:736.0px;top:767.6px;width:65.8px;height:1px;background:#173f2b;"></div>
<div style="position:absolute;left:736.0px;top:768.5px;width:65.8px;height:1.5px;background:#5ec490;"></div>
<div style="position:absolute;left:804.18px;top:570.6px;width:65.8px;height:26.2px;background:#32323b;"></div>
<div style="position:absolute;left:804.18px;top:771px;width:65.8px;height:22.4px;background:#32323b;"></div>
<div style="position:absolute;left:804.18px;top:460px;width:65.8px;height:110.1px;background:#2de07b;"></div>
<div style="position:absolute;left:804.18px;top:767.6px;width:65.8px;height:1px;background:#173f2b;"></div>
<div style="position:absolute;left:804.18px;top:768.5px;width:65.8px;height:1.5px;background:#5ec490;"></div>
<div style="position:absolute;left:872.36px;top:570.6px;width:65.8px;height:26.2px;background:#3c3c47;"></div>
<div style="position:absolute;left:872.36px;top:771px;width:65.8px;height:22.4px;background:#3c3c47;"></div>
<div style="position:absolute;left:872.36px;top:445px;width:65.8px;height:125.1px;background:#2de07b;"></div>
<div style="position:absolute;left:872.36px;top:653.8px;width:65.8px;height:116.2px;background:#2de07b;"></div>
<div style="position:absolute;left:940.54px;top:570.6px;width:65.8px;height:26.2px;background:#32323b;"></div>
<div style="position:absolute;left:940.54px;top:771px;width:65.8px;height:22.4px;background:#32323b;"></div>
<div style="position:absolute;left:940.54px;top:567.7px;width:65.8px;height:1px;background:#173f2b;"></div>
<div style="position:absolute;left:940.54px;top:568.6px;width:65.8px;height:1.5px;background:#5ec490;"></div>
<div style="position:absolute;left:940.54px;top:704px;width:65.8px;height:66px;background:#2de07b;"></div>
<div style="position:absolute;left:1008.72px;top:570.6px;width:65.8px;height:26.2px;background:#32323b;"></div>
<div style="position:absolute;left:1008.72px;top:771px;width:65.8px;height:22.4px;background:#32323b;"></div>
<div style="position:absolute;left:1008.72px;top:384.6px;width:65.8px;height:185.5px;background:#2de07b;"></div>
<div style="position:absolute;left:1008.72px;top:604.5px;width:65.8px;height:165.5px;background:#2de07b;"></div>
<div style="position:absolute;left:1076.9px;top:570.6px;width:65.8px;height:26.2px;background:#32323b;"></div>
<div style="position:absolute;left:1076.9px;top:771px;width:65.8px;height:22.4px;background:#32323b;"></div>
<div style="position:absolute;left:1076.9px;top:409.8px;width:65.8px;height:160.3px;background:#2de07b;"></div>
<div style="position:absolute;left:1076.9px;top:767.6px;width:65.8px;height:1px;background:#173f2b;"></div>
<div style="position:absolute;left:1076.9px;top:768.5px;width:65.8px;height:1.5px;background:#5ec490;"></div>
<div style="position:absolute;left:23px;top:569px;width:19px;height:53.5px;background:#393943;border-radius:0 6px 6px 0;"></div>
<svg style="position:absolute;left:24px;top:585px;" width="16" height="20" viewBox="24 585 16 20"><path d="M35,590.6 L29,596 L35,601.4" fill="none" stroke="#b6b6be" stroke-width="1.3"/></svg>
<div style="position:absolute;left:1156.5px;top:569.5px;width:19px;height:52.5px;background:#393943;border-radius:6px 0 0 6px;"></div>
<svg style="position:absolute;left:1158px;top:585px;" width="16" height="20" viewBox="1158 585 16 20"><path d="M1164.2,590.6 L1170.2,596 L1164.2,601.4" fill="none" stroke="#b6b6be" stroke-width="1.3"/></svg>
<div style="position:absolute;left:54.7px;top:821.3px;width:65.8px;height:32px;background:#3c3c47;border-radius:6px 0 0 6px;"></div>
<div class="t" style="left:-63.900000000000006px;top:787.4px;font-size:11px;color:#f0f0f4;font-weight:700;letter-spacing:0.6px;text-indent:0.6px;">1</div>
<div style="position:absolute;left:122.88px;top:821.3px;width:65.8px;height:32px;background:#3c3c47;"></div>
<div class="t" style="left:4.280000000000001px;top:787.4px;font-size:11px;color:#f0f0f4;font-weight:700;letter-spacing:0.6px;text-indent:0.6px;">2</div>
<div style="position:absolute;left:190.56px;top:821.3px;width:66.3px;height:32px;background:#2de07b;"></div>
<div class="t" style="left:72.46000000000001px;top:787.4px;font-size:11px;color:#eafff2;font-weight:700;letter-spacing:0.6px;text-indent:0.6px;">3</div>
<div style="position:absolute;left:259.24px;top:822px;width:65.8px;height:30px;background:#31313a;"></div>
<div class="t" style="left:140.94px;top:787.2px;font-size:8.5px;color:#a5a5ae;font-weight:700;letter-spacing:0px;text-indent:0px;">+</div>
<div style="position:absolute;left:327.42px;top:822px;width:65.8px;height:30px;background:#31313a;"></div>
<div class="t" style="left:209.12px;top:787.2px;font-size:8.5px;color:#a5a5ae;font-weight:700;letter-spacing:0px;text-indent:0px;">+</div>
<div style="position:absolute;left:395.6px;top:822px;width:65.8px;height:30px;background:#31313a;"></div>
<div class="t" style="left:277.3px;top:787.2px;font-size:8.5px;color:#a5a5ae;font-weight:700;letter-spacing:0px;text-indent:0px;">+</div>
<div style="position:absolute;left:463.78px;top:822px;width:65.8px;height:30px;background:#31313a;"></div>
<div class="t" style="left:345.47999999999996px;top:787.2px;font-size:8.5px;color:#a5a5ae;font-weight:700;letter-spacing:0px;text-indent:0px;">+</div>
<div style="position:absolute;left:531.96px;top:822px;width:65.8px;height:30px;background:#31313a;"></div>
<div class="t" style="left:413.65999999999997px;top:787.2px;font-size:8.5px;color:#a5a5ae;font-weight:700;letter-spacing:0px;text-indent:0px;">+</div>
<div style="position:absolute;left:600.14px;top:821.3px;width:65.8px;height:32px;background:#3c3c47;"></div>
<div class="t" style="left:481.53999999999996px;top:787.4px;font-size:11px;color:#f0f0f4;font-weight:700;letter-spacing:0.6px;text-indent:0.6px;">9</div>
<div style="position:absolute;left:668.32px;top:821.3px;width:65.8px;height:32px;background:#3c3c47;"></div>
<div class="t" style="left:549.72px;top:787.4px;font-size:11px;color:#f0f0f4;font-weight:700;letter-spacing:0.6px;text-indent:0.6px;">10</div>
<div style="position:absolute;left:736.5px;top:821.3px;width:65.8px;height:32px;background:#3c3c47;"></div>
<div class="t" style="left:617.9px;top:787.4px;font-size:11px;color:#f0f0f4;font-weight:700;letter-spacing:0.6px;text-indent:0.6px;">11</div>
<div style="position:absolute;left:804.68px;top:822px;width:65.8px;height:30px;background:#31313a;"></div>
<div class="t" style="left:686.3799999999999px;top:787.2px;font-size:8.5px;color:#a5a5ae;font-weight:700;letter-spacing:0px;text-indent:0px;">+</div>
<div style="position:absolute;left:872.86px;top:822px;width:65.8px;height:30px;background:#31313a;"></div>
<div class="t" style="left:754.56px;top:787.2px;font-size:8.5px;color:#a5a5ae;font-weight:700;letter-spacing:0px;text-indent:0px;">+</div>
<div style="position:absolute;left:941.04px;top:822px;width:65.8px;height:30px;background:#31313a;"></div>
<div class="t" style="left:822.7399999999999px;top:787.2px;font-size:8.5px;color:#a5a5ae;font-weight:700;letter-spacing:0px;text-indent:0px;">+</div>
<div style="position:absolute;left:1009.22px;top:822px;width:65.8px;height:30px;background:#31313a;"></div>
<div class="t" style="left:890.9200000000001px;top:787.2px;font-size:8.5px;color:#a5a5ae;font-weight:700;letter-spacing:0px;text-indent:0px;">+</div>
<div style="position:absolute;left:1077.4px;top:822px;width:65.8px;height:30px;background:#31313a;border-radius:0 6px 6px 0;"></div>
<div class="t" style="left:959.1000000000001px;top:787.2px;font-size:8.5px;color:#a5a5ae;font-weight:700;letter-spacing:0px;text-indent:0px;">+</div>
<svg style="position:absolute;left:1150px;top:828px;" width="22" height="18" viewBox="1150 828 22 18"><path d="M1156.8,832.2 H1167.8 V842 H1156.8 L1153.2,837.1 Z" fill="#8e8e98"/><path d="M1158.6,834.6 L1163,839.4 M1163,834.6 L1158.6,839.4" stroke="#2e2e37" stroke-width="1.1"/></svg>
</body></html>
